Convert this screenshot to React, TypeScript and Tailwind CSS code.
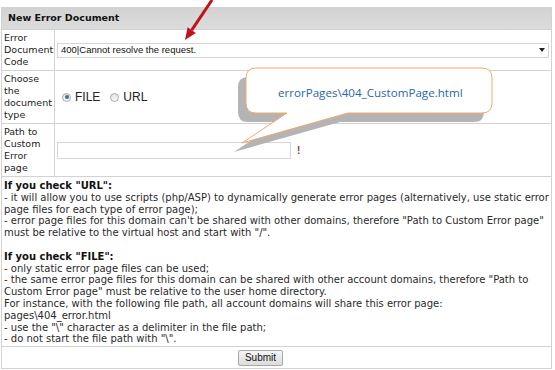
import React from "react";

const labelCls =
  "w-[53px] shrink-0 border-r border-[#d2d2d2] pl-[2px] pt-[2px] pb-[2px] text-[9.5px] leading-[12px] text-[#222]";

function Radio({ checked }: { checked?: boolean }) {
  return (
    <span className="flex h-[9px] w-[9px] items-center justify-center rounded-full border border-[#a9a9a9] bg-gradient-to-b from-[#e4e4e4] to-[#f8f8f8]">
      {checked && <span className="h-[4px] w-[4px] rounded-full bg-[#3d6fa6]" />}
    </span>
  );
}

function Callout() {
  return (
    <div className="pointer-events-none absolute left-[230px] top-[60px] h-[100px] w-[270px]">
      <svg width="270" height="100" viewBox="0 0 270 100">
        <path
          d="M 18 17 H 244 Q 254 17 254 27 V 52 Q 254 62 244 62 H 110 L 4 92 L 49 62 H 18 Q 8 62 8 52 V 27 Q 8 17 18 17 Z"
          fill="#b4b4b4"
        />
        <path
          d="M 26 8 H 252 Q 262 8 262 18 V 43 Q 262 53 252 53 H 118 L 12 83 L 57 53 H 26 Q 16 53 16 43 V 18 Q 16 8 26 8 Z"
          fill="#ffffff"
          stroke="#f2a86a"
          strokeWidth="1"
        />
      </svg>
      <span className="absolute left-[48px] top-[26px] whitespace-nowrap font-['Open_Sans',sans-serif] text-[11.6px] leading-[14px] text-[#2a66ad]">
        errorPages\404_CustomPage.html
      </span>
    </div>
  );
}

function RedArrow() {
  return (
    <svg
      className="pointer-events-none absolute left-[178px] top-0"
      width="40"
      height="45"
      viewBox="0 0 40 45"
    >
      <line x1="34" y1="0" x2="13.7" y2="30.1" stroke="#c0141c" strokeWidth="3" />
      <polygon points="7,40 17.8,32.9 9.6,27.3" fill="#c0141c" />
    </svg>
  );
}

export default function App() {
  return (
    <div className="relative h-[370px] w-[555px] overflow-hidden bg-white pt-[7px] font-['DejaVu_Sans',sans-serif] text-[#222]">
      <div className="ml-[1px] w-[551px] border-x border-b border-[#d2d2d2]">
        <div className="flex h-[22px] items-center bg-gradient-to-b from-[#d2d2d2] to-[#dcdcdc] pl-[6px] text-[9.5px] font-bold text-[#111]">
          New Error Document
        </div>

        <div className="flex border-t border-[#d2d2d2]">
          <div className={labelCls}>
            Error
            <br />
            Document
            <br />
            Code
          </div>
          <div className="flex flex-1 items-center px-[2px]">
            <div className="flex h-[15px] flex-1 items-center justify-between border border-[#d6d6d6] bg-white pl-[3px] pr-[3px] font-['Liberation_Sans',sans-serif] text-[9.5px] text-[#111]">
              <span>400|Cannot resolve the request.</span>
              <span className="h-0 w-0 border-x-[3px] border-t-[4px] border-x-transparent border-t-[#222]" />
            </div>
          </div>
        </div>

        <div className="flex border-t border-[#d2d2d2]">
          <div className={labelCls}>
            Choose
            <br />
            the
            <br />
            document
            <br />
            type
          </div>
          <div className="flex flex-1 items-center gap-[4px] pl-[7px] font-['Liberation_Sans',sans-serif] text-[12px] text-[#222]">
            <Radio checked />
            <span className="mr-[6px]">FILE</span>
            <Radio />
            <span>URL</span>
          </div>
        </div>

        <div className="flex border-t border-[#d2d2d2]">
          <div className={labelCls}>
            Path to
            <br />
            Custom
            <br />
            Error
            <br />
            page
          </div>
          <div className="flex flex-1 items-center pl-[2px]">
            <div className="h-[17px] w-[234px] border border-[#d6d6d6] bg-white" />
            <span className="ml-[6px] font-['Liberation_Sans',sans-serif] text-[10px] font-bold text-[#b0262c]">
              !
            </span>
          </div>
        </div>

        <div className="border-t border-[#d2d2d2] pb-[1px] pl-[2px] pt-[3px] text-[10px] leading-[11.8px] text-[#2a2a2a]">
          <div className="font-bold text-[#111]">If you check "URL":</div>
          <div>
            - it will allow you to use scripts (php/ASP) to dynamically generate error pages (alternatively, use static error
            page files for each type of error page);
          </div>
          <div>
            - error page files for this domain can't be shared with other domains, therefore "Path to Custom Error page"
            must be relative to the virtual host and start with "/".
          </div>
          <div className="h-[11.8px]" />
          <div className="font-bold text-[#111]">If you check "FILE":</div>
          <div>- only static error page files can be used;</div>
          <div>
            - the same error page files for this domain can be shared with other account domains, therefore "Path to
            Custom Error page" must be relative to the user home directory.
          </div>
          <div>For instance, with the following file path, all account domains will share this error page:</div>
          <div>pages\404_error.html</div>
          <div>- use the "\" character as a delimiter in the file path;</div>
          <div>- do not start the file path with "\".</div>
        </div>

        <div className="flex h-[22px] items-center border-t border-[#d2d2d2] pl-[236px]">
          <button className="h-[16px] w-[45px] rounded-[2px] border border-[#a8a8a8] bg-gradient-to-b from-[#f6f6f6] to-[#dcdcdc] font-['Liberation_Sans',sans-serif] text-[10px] leading-[14px] text-[#111]">
            Submit
          </button>
        </div>
      </div>

      <Callout />
      <RedArrow />
    </div>
  );
}
